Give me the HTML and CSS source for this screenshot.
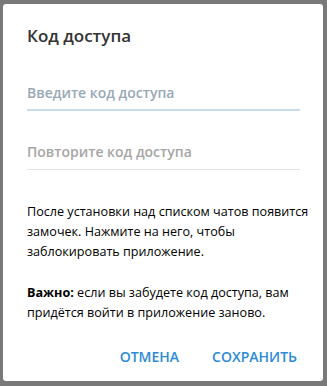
FILE: index.html
```html
<!DOCTYPE html>
<html lang="ru">
<head>
<meta charset="utf-8">
<link rel="stylesheet" href="styles.css">
</head>
<body>
<div class="dialog">
  <div class="title">Код доступа</div>
  <div class="field field-active"><span class="ph">Введите код доступа</span></div>
  <div class="field"><span class="ph">Повторите код доступа</span></div>
  <p class="text">После установки над списком чатов появится замочек. Нажмите на него, чтобы заблокировать приложение.</p>
  <p class="text note"><b>Важно:</b> если вы забудете код доступа, вам придётся войти в приложение заново.</p>
  <div class="actions">
    <span class="btn">ОТМЕНА</span>
    <span class="btn">СОХРАНИТЬ</span>
  </div>
</div>
</body>
</html>
```
FILE: styles.css
```css
html, body {
  margin: 0;
  padding: 0;
}
body {
  background: #797979;
  width: 327px;
  height: 386px;
  overflow: hidden;
  font-family: "Open Sans", "Noto Sans", sans-serif;
}
.dialog {
  margin: 4px 0 0 3px;
  width: 320px;
  height: 377px;
  box-sizing: border-box;
  background: #fff;
  border-radius: 3px;
  padding: 22px 23px 0 24px;
  display: flex;
  flex-direction: column;
}
.title {
  font-size: 17px;
  line-height: 20px;
  font-weight: 600;
  color: #333;
}
.field {
  margin-top: 37px;
  padding-bottom: 7px;
  border-bottom: 1px solid #e4e4e4;
  font-size: 14px;
  line-height: 20px;
}
.field + .field {
  margin-top: 31px;
}
.field-active {
  border-bottom: 2px solid #c8dbea;
  padding-bottom: 6px;
}
.field .ph {
  color: #a6a6a6;
  font-weight: 600;
}
.field-active .ph {
  color: #99a8b7;
}
.text {
  margin: 32px -14px 0 0;
  font-size: 12.6px;
  line-height: 20px;
  color: #000;
}
.text.note {
  margin-top: 21px;
}
.text b {
  font-weight: 700;
}
.actions {
  margin-top: 24px;
  display: flex;
  justify-content: flex-end;
  gap: 33px;
  padding-right: 3px;
}
.btn {
  font-size: 14px;
  line-height: 20px;
  font-weight: 600;
  color: #2c8ad6;
}
```
